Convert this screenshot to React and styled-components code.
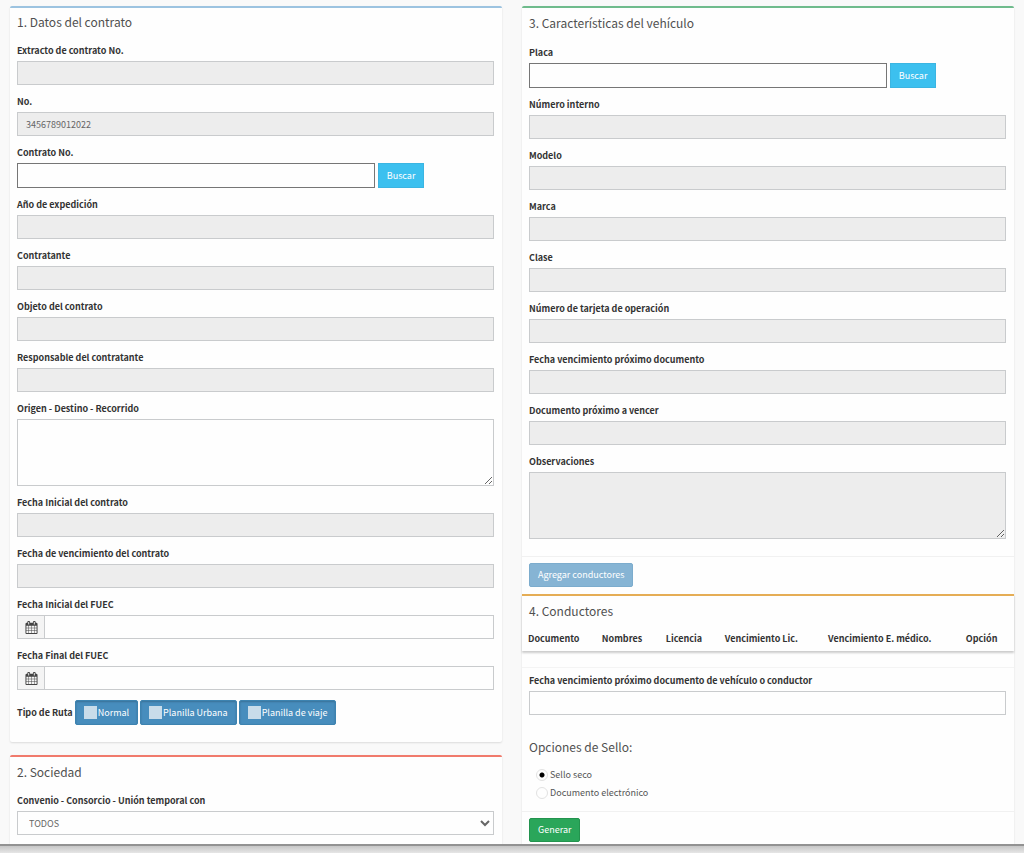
import React from "react";
import styled, { createGlobalStyle, css } from "styled-components";

const GlobalStyle = createGlobalStyle`
  * {
    box-sizing: border-box;
  }
  body {
    margin: 0;
    background-color: #f9f9f9;
    color: #333;
    font-family: "Noto Sans CJK SC", "Noto Sans", sans-serif;
    font-size: 9px;
    line-height: 14px;
  }
  button, input, select, textarea {
    font: inherit;
    margin: 0;
  }
`;

const Page = styled.div`
  height: 100vh;
  display: flex;
  flex-direction: column;
`;
const Content = styled.main`
  flex: 1;
  min-height: 0;
  overflow: hidden;
  display: grid;
  grid-template-columns: 1fr 1fr;
  align-items: start;
  gap: 20px;
  padding: 6px 10px 0;
`;
const Column = styled.div`
  display: flex;
  flex-direction: column;
  gap: 13px;
`;
const BottomEdge = styled.footer`
  flex: none;
  height: 9px;
  border-top: 2px solid #929292;
  background: linear-gradient(#c6c6c6, #e6e6e6);
`;
const Box = styled.section`
  background-color: #fefefe;
  border-top: 2px solid ${(props) => props.$color};
  border-radius: 2px;
  box-shadow: 0 1px 2px rgba(0, 0, 0, 0.12);
`;
const NestedBox = styled(Box)`
  border-radius: 0;
  box-shadow: 0 2px 2px rgba(0, 0, 0, 0.2);
`;
const Body = styled.div`
  padding: 0 8px ${(props) => props.$bottom || 0}px 7px;
`;
const Title = styled.h3`
  margin: 0;
  padding: ${(props) => props.$top || 4}px 0 ${(props) => props.$bottom || 12}px;
  font-size: 12px;
  line-height: 20px;
  font-weight: 400;
  color: #505050;
`;
const BoxTitle = styled(Title)`
  padding-left: 7px;
`;
const Group = styled.div`
  margin-bottom: 10px;
`;
const Label = styled.label`
  display: block;
  margin-bottom: 3px;
  font-weight: 700;
  color: #333;
`;
const control = css`
  display: block;
  width: 100%;
  border: 1px solid #c9cbcd;
  border-radius: 0;
  background-color: #fefefe;
  color: #666;
  outline: none;
  &:read-only:not(select) {
    background-color: #ededed;
  }
`;
const Input = styled.input`
  ${control};
  height: 24px;
  padding: 0 8px;
`;
const Select = styled.select`
  ${control};
  height: 24px;
  padding: 0 0 0 7px;
`;
const TextArea = styled.textarea`
  ${control};
  height: 67px;
  padding: 4px 8px;
  resize: vertical;
`;
const SearchRow = styled.div`
  display: flex;
  gap: 3px;
`;
const SearchInput = styled(Input)`
  width: 75%;
  height: 25px;
  border-color: #767676;
`;
const Button = styled.button`
  min-height: 24px;
  padding: 0 8px;
  border: 1px solid ${(props) => props.$border};
  border-radius: ${(props) => (props.$square ? 0 : 2)}px;
  background-color: ${(props) => props.$bg};
  color: #fff;
`;
const AddonRow = styled.div`
  display: flex;
`;
const Addon = styled.span`
  flex: none;
  width: 27px;
  display: flex;
  align-items: center;
  justify-content: center;
  border: 1px solid #c9cbcd;
  border-right: 0;
  background-color: #f4f4f4;
  color: #444;
`;
const RouteRow = styled.fieldset`
  display: flex;
  align-items: center;
  gap: 2px;
  margin: 0;
  padding: 0;
  border: 0;
`;
const RouteName = styled.span`
  font-weight: 700;
`;
const RouteOption = styled.label`
  height: 25px;
  display: flex;
  align-items: center;
  gap: 1px;
  padding: 0 8px;
  border: 1px solid #3d83b0;
  border-radius: 2px;
  background-color: #478dbd;
  box-shadow: inset 0 1px 2px rgba(0, 0, 0, 0.2);
  color: #fff;
`;
const RouteCheck = styled.input`
  appearance: none;
  flex: none;
  width: 13px;
  height: 13px;
  margin: 0;
  background-color: #c8dcea;
  &:checked {
    background-color: #fff;
  }
`;
const Strip = styled.div`
  padding: 6px 7px 7px;
  border-top: 1px solid #f1f1f1;
`;
const Table = styled.table`
  width: 100%;
  table-layout: fixed;
  border-collapse: collapse;
`;
const Th = styled.th`
  width: ${(props) => props.$width}%;
  padding: 3px 0 5px 6px;
  text-align: left;
  white-space: nowrap;
  font-weight: 700;
`;
const Divider = styled.hr`
  margin: 16px 0 6px;
  border: 0;
  border-top: 1px solid #f4f4f4;
`;
const RadioLabel = styled.label`
  display: flex;
  align-items: center;
  gap: 2px;
  padding-left: 7px;
  height: 18px;
  color: #555;
`;
const Radio = styled.input`
  appearance: none;
  flex: none;
  width: 12px;
  height: 12px;
  margin: 0;
  border: 1px solid #e2e2e2;
  border-radius: 50%;
  background-color: #fefefe;
  &:checked {
    background-image: radial-gradient(circle, #000 2px, transparent 3px);
  }
`;

const CONDUCTORES = [
  { name: "Documento", width: 15 },
  { name: "Nombres", width: 13 },
  { name: "Licencia", width: 12 },
  { name: "Vencimiento Lic.", width: 21 },
  { name: "Vencimiento E. médico.", width: 28 },
  { name: "Opción", width: 11 },
];

function Calendar() {
  return (
    <svg width="13" height="13" viewBox="0 0 1792 1792" fill="currentColor" aria-hidden="true">
      <path d="M192 1664h288v-288h-288v288zm352 0h320v-288h-320v288zm-352-352h288v-320h-288v320zm352 0h320v-320h-320v320zm-352-384h288v-288h-288v288zm736 736h320v-288h-320v288zm-384-736h320v-288h-320v288zm768 736h288v-288h-288v288zm-384-352h320v-320h-320v320zm-352-864v-288q0-13-9.5-22.5t-22.5-9.5h-64q-13 0-22.5 9.5t-9.5 22.5v288q0 13 9.5 22.5t22.5 9.5h64q13 0 22.5-9.5t9.5-22.5zm736 864h288v-320h-288v320zm-384-384h320v-288h-320v288zm384 0h288v-288h-288v288zm32-480v-288q0-13-9.5-22.5t-22.5-9.5h-64q-13 0-22.5 9.5t-9.5 22.5v288q0 13 9.5 22.5t22.5 9.5h64q13 0 22.5-9.5t9.5-22.5zm384-64v1280q0 52-38 90t-90 38h-1408q-52 0-90-38t-38-90v-1280q0-52 38-90t90-38h128v-96q0-66 47-113t113-47h64q66 0 113 47t47 113v96h384v-96q0-66 47-113t113-47h64q66 0 113 47t47 113v96h128q52 0 90 38t38 90z" />
    </svg>
  );
}

function Field({ id, label, ...rest }) {
  return (
    <Group>
      <Label htmlFor={id}>{label}</Label>
      <Input id={id} {...rest} />
    </Group>
  );
}

function SearchField({ id, label }) {
  return (
    <Group>
      <Label htmlFor={id}>{label}</Label>
      <SearchRow>
        <SearchInput id={id} />
        <Button type="button" $bg="#3cc0ef" $border="#3bb5e2" $square>
          Buscar
        </Button>
      </SearchRow>
    </Group>
  );
}

function DateField({ id, label }) {
  return (
    <Group>
      <Label htmlFor={id}>{label}</Label>
      <AddonRow>
        <Addon>
          <Calendar />
        </Addon>
        <Input id={id} />
      </AddonRow>
    </Group>
  );
}

function AreaField({ id, label, readOnly }) {
  return (
    <Group>
      <Label htmlFor={id}>{label}</Label>
      <TextArea id={id} readOnly={readOnly} />
    </Group>
  );
}

function Contrato() {
  return (
    <Box $color="#9cc3e0">
      <BoxTitle>1. Datos del contrato</BoxTitle>
      <Body $bottom={17}>
        <Field id="extracto" label="Extracto de contrato No." readOnly />
        <Field id="numero" label="No." defaultValue="3456789012022" readOnly />
        <SearchField id="contrato" label="Contrato No." />
        <Field id="anio" label="Año de expedición" readOnly />
        <Field id="contratante" label="Contratante" readOnly />
        <Field id="objeto" label="Objeto del contrato" readOnly />
        <Field id="responsable" label="Responsable del contratante" readOnly />
        <AreaField id="recorrido" label="Origen - Destino - Recorrido" />
        <Field id="inicial" label="Fecha Inicial del contrato" readOnly />
        <Field id="vencimiento" label="Fecha de vencimiento del contrato" readOnly />
        <DateField id="fuecInicial" label="Fecha Inicial del FUEC" />
        <DateField id="fuecFinal" label="Fecha Final del FUEC" />
        <RouteRow>
          <RouteName>Tipo de Ruta</RouteName>
          {["Normal", "Planilla Urbana", "Planilla de viaje"].map((name) => (
            <RouteOption key={name}>
              <RouteCheck type="checkbox" />
              {name}
            </RouteOption>
          ))}
        </RouteRow>
      </Body>
    </Box>
  );
}

function Sociedad() {
  return (
    <Box $color="#f07a6c">
      <BoxTitle $top={5}>2. Sociedad</BoxTitle>
      <Body $bottom={20}>
        <Label htmlFor="convenio">Convenio - Consorcio - Unión temporal con</Label>
        <Select id="convenio">
          <option>TODOS</option>
        </Select>
      </Body>
    </Box>
  );
}

function Conductores() {
  return (
    <NestedBox $color="#e5ad55">
      <BoxTitle $top={5} $bottom={8}>4. Conductores</BoxTitle>
      <Table>
        <thead>
          <tr>
            {CONDUCTORES.map((col) => (
              <Th key={col.name} $width={col.width}>
                {col.name}
              </Th>
            ))}
          </tr>
        </thead>
      </Table>
    </NestedBox>
  );
}

function Vehiculo() {
  return (
    <Box $color="#6fbb8c">
      <BoxTitle $top={5} $bottom={13}>3. Características del vehículo</BoxTitle>
      <Body $bottom={7}>
        <SearchField id="placa" label="Placa" />
        <Field id="interno" label="Número interno" readOnly />
        <Field id="modelo" label="Modelo" readOnly />
        <Field id="marca" label="Marca" readOnly />
        <Field id="clase" label="Clase" readOnly />
        <Field id="tarjeta" label="Número de tarjeta de operación" readOnly />
        <Field id="fechaDocumento" label="Fecha vencimiento próximo documento" readOnly />
        <Field id="documento" label="Documento próximo a vencer" readOnly />
        <AreaField id="observaciones" label="Observaciones" readOnly />
      </Body>
      <Strip>
        <Button type="button" $bg="#86b4d4" $border="#7caccd">
          Agregar conductores
        </Button>
      </Strip>
      <Conductores />
      <Divider />
      <Body $bottom={9}>
        <Field
          id="fechaConductor"
          label="Fecha vencimiento próximo documento de vehículo o conductor"
        />
        <Title $top={12} $bottom={9}>Opciones de Sello:</Title>
        <RadioLabel>
          <Radio type="radio" name="sello" defaultChecked />
          Sello seco
        </RadioLabel>
        <RadioLabel>
          <Radio type="radio" name="sello" />
          Documento electrónico
        </RadioLabel>
      </Body>
      <Strip>
        <Button type="submit" $bg="#2aa65a" $border="#23934e">
          Generar
        </Button>
      </Strip>
    </Box>
  );
}

function App() {
  return (
    <>
      <GlobalStyle />
      <Page>
        <Content>
          <Column>
            <Contrato />
            <Sociedad />
          </Column>
          <Vehiculo />
        </Content>
        <BottomEdge />
      </Page>
    </>
  );
}

export default App;
